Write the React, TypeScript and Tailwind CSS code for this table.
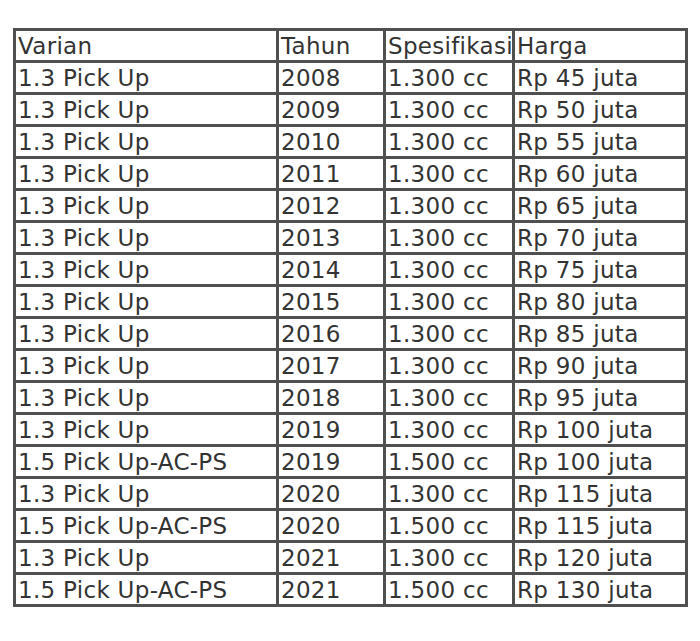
const rows: [string, string, string, string][] = [
  ["1.3 Pick Up", "2008", "1.300 cc", "Rp 45 juta"],
  ["1.3 Pick Up", "2009", "1.300 cc", "Rp 50 juta"],
  ["1.3 Pick Up", "2010", "1.300 cc", "Rp 55 juta"],
  ["1.3 Pick Up", "2011", "1.300 cc", "Rp 60 juta"],
  ["1.3 Pick Up", "2012", "1.300 cc", "Rp 65 juta"],
  ["1.3 Pick Up", "2013", "1.300 cc", "Rp 70 juta"],
  ["1.3 Pick Up", "2014", "1.300 cc", "Rp 75 juta"],
  ["1.3 Pick Up", "2015", "1.300 cc", "Rp 80 juta"],
  ["1.3 Pick Up", "2016", "1.300 cc", "Rp 85 juta"],
  ["1.3 Pick Up", "2017", "1.300 cc", "Rp 90 juta"],
  ["1.3 Pick Up", "2018", "1.300 cc", "Rp 95 juta"],
  ["1.3 Pick Up", "2019", "1.300 cc", "Rp 100 juta"],
  ["1.5 Pick Up-AC-PS", "2019", "1.500 cc", "Rp 100 juta"],
  ["1.3 Pick Up", "2020", "1.300 cc", "Rp 115 juta"],
  ["1.5 Pick Up-AC-PS", "2020", "1.500 cc", "Rp 115 juta"],
  ["1.3 Pick Up", "2021", "1.300 cc", "Rp 120 juta"],
  ["1.5 Pick Up-AC-PS", "2021", "1.500 cc", "Rp 130 juta"],
];

const cell =
  "border-[3px] border-[#505050] h-[32px] px-[2px] py-0 leading-[28px] whitespace-nowrap overflow-hidden text-left font-normal align-middle";

export default function App() {
  return (
    <div className="w-[700px] h-[641px] bg-white pt-[28px] pl-[13px] text-[#333333] text-[23px] tracking-[0.3px] font-['DejaVu_Sans',Verdana,sans-serif]">
      <table className="w-[674px] table-fixed border-collapse">
        <colgroup>
          <col className="w-[263px]" />
          <col className="w-[107px]" />
          <col className="w-[129px]" />
          <col className="w-[173px]" />
        </colgroup>
        <thead>
          <tr>
            <th className={cell}>Varian</th>
            <th className={cell}>Tahun</th>
            <th className={cell}>Spesifikasi</th>
            <th className={cell}>Harga</th>
          </tr>
        </thead>
        <tbody>
          {rows.map((r, i) => (
            <tr key={i}>
              {r.map((v, j) => (
                <td key={j} className={cell}>
                  {v}
                </td>
              ))}
            </tr>
          ))}
        </tbody>
      </table>
    </div>
  );
}
